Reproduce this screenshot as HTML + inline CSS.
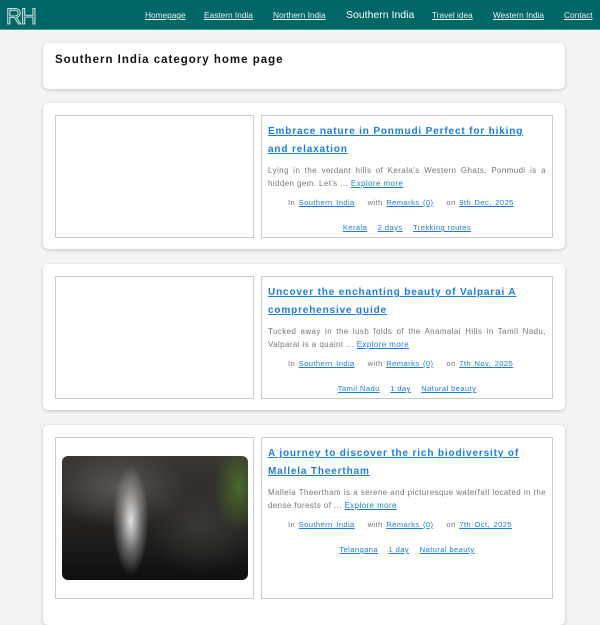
<!DOCTYPE html>
<html><head><meta charset="utf-8"><style>
*{margin:0;padding:0;box-sizing:border-box}
body{width:600px;height:600px;overflow:hidden;background:#f3f3f3;font-family:"Liberation Sans",sans-serif}
.hd{height:30px;background:#006666;border-bottom:1px solid #4a9a9a;position:relative}
.logo{position:absolute;left:6px;top:4px;font-size:22px;font-weight:normal;color:#006666;-webkit-text-stroke:0.8px #fff;letter-spacing:-1px}
.nav a{position:absolute;top:10px;font-size:8.3px;color:#e8f4f4;text-decoration:underline}
.nav .cur{top:9px;font-size:10.5px;text-decoration:none}
.card{position:absolute;left:43px;width:522px;background:#fff;border-radius:5px;box-shadow:0 1px 3px rgba(0,0,0,.2)}
.h1{position:absolute;left:12px;top:11px;font-size:11.5px;font-weight:bold;letter-spacing:1px;color:#111}
.lb{position:absolute;left:12px;top:12px;width:199px;height:123px;border:1px solid #ccc}
.rb{position:absolute;left:218px;top:12px;width:292px;height:123px;border:1px solid #ccc;padding:7px 6px 0 6px}
.t{font-size:10px;font-weight:bold;letter-spacing:.85px;line-height:18px;color:#1e7be0;text-decoration:underline}
.ex{font-size:7.9px;color:#777;letter-spacing:.45px;line-height:12.5px;margin-top:6px;text-align:justify}
a{color:#1e7be0;text-decoration:underline}
.m{font-size:7.6px;color:#777;letter-spacing:.4px;margin-top:8px;padding-left:20px;word-spacing:1px}
.m span{margin-right:13px}
.tg{font-size:7.6px;text-align:center;margin-top:16px;letter-spacing:.4px}
.tg a{margin:0 4px}
.img{position:absolute;left:6px;top:18px;width:186px;height:124px;border-radius:6px;overflow:hidden;
background:radial-gradient(ellipse 18px 55px at 37% 52%,rgba(235,235,235,.95),rgba(200,200,200,.4) 60%,transparent 100%),radial-gradient(ellipse 25px 45px at 95% 25%,#4a6a2a,transparent),radial-gradient(ellipse 70px 40px at 30% 25%,#5a5550,transparent),radial-gradient(ellipse 60px 50px at 75% 55%,#3a3835,transparent),linear-gradient(#3a3632,#1e1c1a 70%,#0f0f0f)}
</style></head><body>
<div class="hd"><div class="logo">RH</div>
<div class="nav"><a style="left:145px">Homepage</a><a style="left:204px">Eastern India</a><a style="left:273px">Northern India</a><a class="cur" style="left:346px;color:#fff">Southern India</a><a style="left:432px">Travel idea</a><a style="left:493px">Western India</a><a style="left:564px">Contact</a></div></div>
<div class="card" style="top:43px;height:46px"><div class="h1">Southern India category home page</div></div>

<div class="card" style="top:103px;height:146px"><div class="lb"></div><div class="rb">
<div class="t">Embrace nature in Ponmudi Perfect for hiking and relaxation</div>
<div class="ex">Lying in the verdant hills of Kerala's Western Ghats, Ponmudi is a hidden gem. Let's ... <a>Explore more</a></div>
<div class="m"><span>In <a>Southern India</a></span><span>with <a>Remarks (0)</a></span><span>on <a>9th Dec, 2025</a></span></div>
<div class="tg"><a>Kerala</a> <a>2 days</a> <a>Trekking routes</a></div></div></div>

<div class="card" style="top:264px;height:146px"><div class="lb"></div><div class="rb">
<div class="t">Uncover the enchanting beauty of Valparai A comprehensive guide</div>
<div class="ex">Tucked away in the lush folds of the Anamalai Hills in Tamil Nadu, Valparai is a quaint ... <a>Explore more</a></div>
<div class="m"><span>In <a>Southern India</a></span><span>with <a>Remarks (0)</a></span><span>on <a>7th Nov, 2025</a></span></div>
<div class="tg"><a>Tamil Nadu</a> <a>1 day</a> <a>Natural beauty</a></div></div></div>

<div class="card" style="top:425px;height:200px"><div class="lb" style="height:162px"><div class="img"></div></div><div class="rb" style="height:162px">
<div class="t">A journey to discover the rich biodiversity of Mallela Theertham</div>
<div class="ex">Mallela Theertham is a serene and picturesque waterfall located in the dense forests of ... <a>Explore more</a></div>
<div class="m"><span>In <a>Southern India</a></span><span>with <a>Remarks (0)</a></span><span>on <a>7th Oct, 2025</a></span></div>
<div class="tg"><a>Telangana</a> <a>1 day</a> <a>Natural beauty</a></div></div></div>
</body></html>
